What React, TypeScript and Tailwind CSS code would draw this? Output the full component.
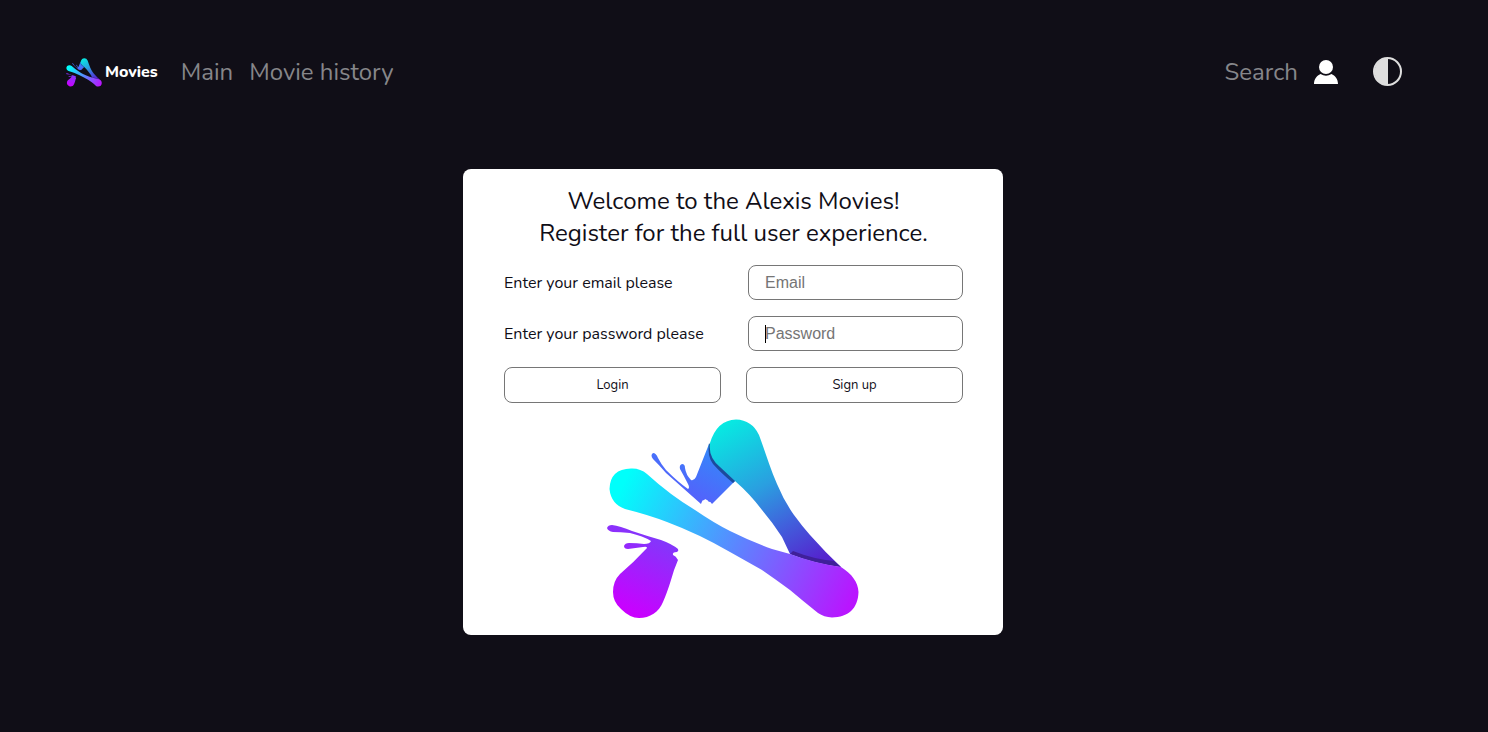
import React from "react";

function BrandMark({ id, className }: { id: string; className: string }) {
  const ref = (name: string) => `${id}-${name}`;
  const fill = (name: string) => `url(#${id}-${name})`;
  return (
    <svg viewBox="7 9 253 200" className={className} aria-hidden="true">
      <defs>
        <linearGradient id={ref("bar")} gradientUnits="userSpaceOnUse" x1="22" y1="76" x2="252" y2="190">
          <stop offset="0" stopColor="#00fffb" />
          <stop offset="0.5" stopColor="#5b86ff" />
          <stop offset="1" stopColor="#b915ff" />
        </linearGradient>
        <linearGradient id={ref("arm")} gradientUnits="userSpaceOnUse" x1="126" y1="10" x2="210" y2="155">
          <stop offset="0" stopColor="#06ece2" />
          <stop offset="0.45" stopColor="#2a9fe0" />
          <stop offset="0.72" stopColor="#4160dc" />
          <stop offset="1" stopColor="#5424ce" />
        </linearGradient>
        <linearGradient id={ref("blue")} gradientUnits="userSpaceOnUse" x1="124" y1="44" x2="98" y2="92">
          <stop offset="0" stopColor="#3488fa" />
          <stop offset="1" stopColor="#5461fb" />
        </linearGradient>
        <linearGradient id={ref("purple")} gradientUnits="userSpaceOnUse" x1="62" y1="128" x2="28" y2="202">
          <stop offset="0" stopColor="#8138fb" />
          <stop offset="1" stopColor="#ca00ff" />
        </linearGradient>
      </defs>
      <path
        fill={fill("blue")}
        d="M109 34 L96 67 Q94 71 91 70 Q86 65 85 58 Q85 54 82 54 Q79 55 80 59 Q84 66 88 74 Q90 78 88 79 Q78 72 66 60 Q61 54 58 48 Q56 43 53 43 Q50 45 53 49 Q60 56 66 63 L101 94 Q102 91 103 90 Q104 91 105 89 Q108 90 109 92 Q110 91 112 94 L135 71 L124 52 Z"
      />
      <path fill="#1c4b9c" d="M109 33 Q107 46 113 54 Q121 63 133 73 L136 70 L120 50 Z" />
      <path
        fill={fill("arm")}
        d="M110 33 Q117 10 136 9.500 Q152 10 159 25 C165 41 170 58 177 74 Q184 91 194 105 Q202 116 210 125 Q225 142 241 157 Q215 153 190 144 L182 127 Q173 113 162 100 Q150 84 135 71 L120 57 Q108 47 110 33 Z"
      />
      <path fill="#3f209a" d="M190 144 L193 141 Q213 149 234 151 L241 157 Q215 154 190 144 Z" />
      <path
        fill={fill("bar")}
        d="M9.500 79 Q10 59 31 58.500 Q40 58 47 64 Q70 85 95 100 Q114 113 130 121 Q150 131 172 139 L190 144 Q214 153 241 157 C252 164 258 172 258.500 182 C258 199 248 207 232 207.500 Q224 207 218 203 Q203 191 190 180 Q175 169 162 160 L130 142 Q99 124 67 112 Q49 105 25 99 Q11 94 9.500 79 Z"
      />
      <path
        fill={fill("purple")}
        d="M7 118 Q8 115 12 115 Q20 116 32 121 Q47 126 61 130 Q72 134 78 139 Q79 141 77 142 Q72 142 73 145 Q76 146 78 150 Q74 159 71 170 Q67 183 63 192 C59 202 50 208 39 208 Q30 208 21 199 Q13 192 13 182 Q13 171 20 164 Q34 152 47 138 Q47 136 43 137 L28 139 Q24 139 24 136 Q25 133 29 133 Q37 133 44 134 Q50 134 51 131 Q43 126 30 123 Q20 122 13 122 Q8 121 7 118 Z"
      />
    </svg>
  );
}

const navLink = "text-2xl text-[#86868a]";
const field =
  "h-[35px] w-full rounded-lg border border-[#767676] bg-white px-4 font-['Liberation_Sans',Arial,sans-serif] text-base text-black placeholder:text-[#757575] outline-none";
const action = "h-9 w-[217px] rounded-lg border border-[#767676] bg-white text-[13px] text-[#100e17]";

export default function App() {
  return (
    <div className="min-h-screen bg-[#100e17] pl-16 pr-[86px] pt-14 font-['Nunito','Open_Sans',sans-serif]">
      <header className="flex h-8 items-center justify-between">
        <nav className="flex items-center" aria-label="Primary">
          <a href="#home" className="ml-0.5 flex items-center gap-[3px] text-base font-extrabold text-white">
            <BrandMark id="small" className="h-[29px] w-9" />
            Movies
          </a>
          <a href="#main" className={`ml-[23px] ${navLink}`}>Main</a>
          <a href="#history" className={`ml-4 ${navLink}`}>Movie history</a>
        </nav>
        <div className="flex items-center">
          <a href="#search" className={navLink}>Search</a>
          <button type="button" aria-label="Account" className="ml-4">
            <svg viewBox="0 0 24 24" className="size-6" fill="#fff" aria-hidden="true">
              <circle cx="12" cy="7" r="7" />
              <path d="M0 24 C0 19 3 15.500 6.500 14 Q12 17.500 17.500 14 C21 15.500 24 19 24 24 Z" />
            </svg>
          </button>
          <button type="button" aria-label="Toggle theme" className="ml-[35px]">
            <svg viewBox="0 0 29 30" className="h-[30px] w-[29px]" aria-hidden="true">
              <circle cx="14.500" cy="14.500" r="13.500" fill="none" stroke="#dedede" strokeWidth="2" />
              <path d="M15 1 A13.500 13.500 0 0 0 15 28 Z" fill="#dedede" />
            </svg>
          </button>
        </div>
      </header>

      <main className="mt-[81px] flex justify-center">
        <form
          className="flex w-full max-w-[540px] flex-col gap-4 rounded-lg bg-white py-4 pl-[41px] pr-10 text-[#100e17]"
          onSubmit={(e) => e.preventDefault()}
        >
          <h1 className="text-center text-2xl font-normal">
            Welcome to the Alexis Movies!
            <br />
            Register for the full user experience.
          </h1>
          <div className="flex items-center justify-between">
            <label htmlFor="email">Enter your email please</label>
            <div className="w-[215px]">
              <input id="email" type="email" placeholder="Email" className={field} />
            </div>
          </div>
          <div className="flex items-center justify-between">
            <label htmlFor="password">Enter your password please</label>
            <div className="relative flex w-[215px] items-center">
              <input id="password" type="password" placeholder="Password" className={field} />
              <span className="pointer-events-none absolute left-[17px] h-[18px] w-px bg-black" />
            </div>
          </div>
          <div className="flex justify-between">
            <button type="submit" className={`pt-px ${action}`}>Login</button>
            <button type="button" className={`pt-px ${action}`}>Sign up</button>
          </div>
          <BrandMark id="large" className="h-[200px] w-[253px] self-center" />
        </form>
      </main>
    </div>
  );
}
